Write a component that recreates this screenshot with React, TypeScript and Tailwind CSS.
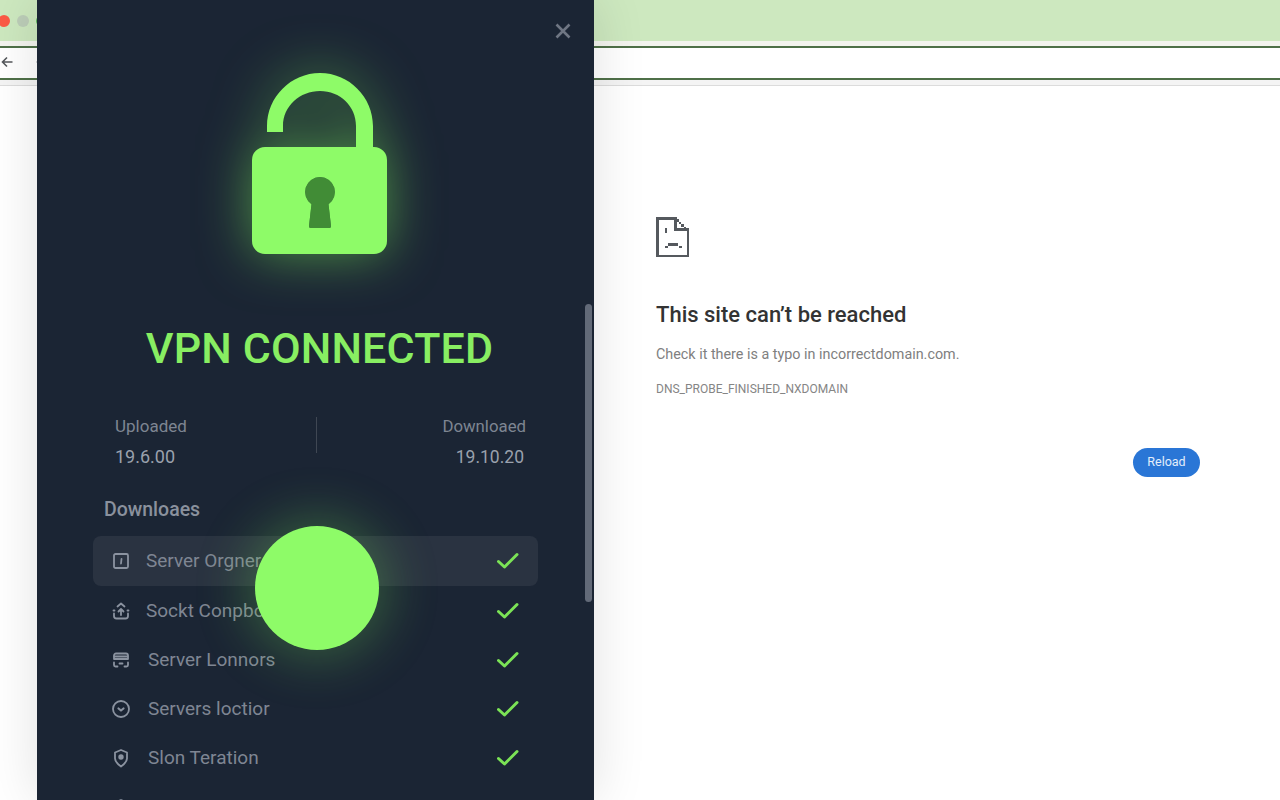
import React from "react";

const rows = [
  { label: "Server Orgner", icon: "a", gap: "gap-[15px]" },
  { label: "Sockt Conpbor", icon: "b", gap: "gap-[15px]" },
  { label: "Server Lonnors", icon: "c", gap: "gap-[17px]" },
  { label: "Servers loctior", icon: "d", gap: "gap-[17px]" },
  { label: "Slon Teration", icon: "e", gap: "gap-[17px]" },
  { label: "", icon: "e", gap: "gap-[17px]" },
];

function RowIcon({ kind }: { kind: string }) {
  const c = { fill: "none", stroke: "#8b93a0", strokeWidth: 1.8, strokeLinecap: "round" as const, strokeLinejoin: "round" as const };
  return (
    <svg width="20" height="20" viewBox="0 0 20 20" className="shrink-0">
      {kind === "a" && (<g {...c}><rect x="3" y="3" width="14" height="14" rx="1.5" /><path d="M10.5 8l-.5 4.500" /></g>)}
      {kind === "b" && (<g {...c}><path d="M6.500 5.500L10 2.500l3.500 3M3.500 9.500H2.500M16.500 9.500h1M3 12.500v2.500a2.500 2.500 0 0 0 2.500 2.500h9a2.500 2.500 0 0 0 2.500-2.500v-2.500" /><path d="M7.500 10.500L10 8l2.500 2.500M10 8v6" /></g>)}
      {kind === "c" && (<g {...c}><path d="M3 5.500a2 2 0 0 1 2-2h10a2 2 0 0 1 2 2V9H3z" /><path d="M3.500 6.500h13" /><path d="M3 12.500v2.500a1.500 1.500 0 0 0 1.500 1.500h2M17 12.500v2.500a1.500 1.500 0 0 1-1.500 1.500h-2M8.500 13.500h3" /></g>)}
      {kind === "d" && (<g {...c}><circle cx="10" cy="10" r="8" /><path d="M7.500 9.500l2.500 2 2.500-2" strokeWidth="2.200" /></g>)}
      {kind === "e" && (<g {...c}><path d="M10 2l6 2.500v6c0 3-2.500 5.500-6 8-3.500-2.500-6-5-6-8v-6z" /><circle cx="10" cy="9" r="1.800" fill="#8b93a0" /></g>)}
    </svg>
  );
}

function Check() {
  return (
    <svg width="22" height="18" viewBox="0 0 22 18" className="shrink-0">
      <path d="M1.500 9.500L7.500 15L20 2.500" fill="none" stroke="#7be356" strokeWidth="3" strokeLinecap="round" strokeLinejoin="round" />
    </svg>
  );
}

const KEYHOLE = "M68 104a15 15 0 0 0-8.500 27.300L57 153c-.2 1.300.5 2 2 2h18c1.500 0 2.200-.7 2-2l-2.500-21.700A15 15 0 0 0 68 104z";

function Lock() {
  return (
    <svg width="135" height="181" viewBox="0 0 135 181" className="drop-shadow-[0_0_26px_rgba(130,255,90,0.5)]">
      <path fill="#8efb68" d="M15 59V53C15 24 39 0 68 0s53 24 53 53v23h-17V53c-0-20-16-35-36-35S31 33 31 53v6z" />
      <path fill="#8efb68" fillRule="evenodd" d={`M13 74h109a13 13 0 0 1 13 13v81a13 13 0 0 1-13 13H13a13 13 0 0 1-13-13V87a13 13 0 0 1 13-13z${KEYHOLE}`} />
      <path fill="#418c36" d={KEYHOLE} />
    </svg>
  );
}

function SadPage() {
  return (
    <svg width="34" height="40" viewBox="0 0 34 40" shapeRendering="crispEdges" fill="#55595e">
      <rect x="0" y="0" width="20" height="2.500" />
      <rect x="0" y="0" width="2.500" height="40" />
      <rect x="0" y="37.500" width="33" height="2.500" />
      <rect x="30.500" y="12" width="2.500" height="28" />
      <rect x="18" y="0" width="2.500" height="13" />
      <rect x="18" y="11" width="15" height="2.500" />
      <rect x="20" y="2" width="2.500" height="2.500" />
      <rect x="22.500" y="4.500" width="2.500" height="2.500" />
      <rect x="25" y="7" width="2.500" height="2.500" />
      <rect x="27.500" y="9.500" width="2.500" height="2.500" />
      <rect x="8.500" y="11" width="2.500" height="5" />
      <rect x="12" y="26" width="10" height="2.500" />
      <rect x="8.500" y="28.500" width="3" height="2.500" />
      <rect x="22.500" y="28.500" width="3" height="2.500" />
    </svg>
  );
}

export default function App() {
  return (
    <div className="relative w-[1280px] h-[800px] overflow-hidden bg-white font-['Roboto','Liberation_Sans',sans-serif]">
      {/* Browser behind the panel */}
      <div className="flex flex-col h-full">
        <div className="h-[41px] shrink-0 bg-[#cde8bf] flex items-center -ml-[2px] gap-[7px]">
          <span className="w-[12px] h-[12px] rounded-full bg-[#fb5a45]" />
          <span className="w-[12px] h-[12px] rounded-full bg-[#bccdb8]" />
          <span className="w-[12px] h-[12px] rounded-full bg-[#5cb85c]" />
        </div>
        <div className="h-[45px] shrink-0 bg-white border-b border-[#dcdcdc] flex flex-col">
          <div className="h-[7px] bg-[#f3f4ee] border-b-2 border-[#4f7048] shrink-0" />
          <div className="flex-1 flex items-center pl-[1px] gap-[23px]">
            <svg width="12" height="12" viewBox="0 0 12 12" fill="none" stroke="#55585c" strokeWidth="1.600" className="-mt-[2px]">
              <path d="M11.500 6H1.500M6 1.500L1.500 6 6 10.500" />
            </svg>
            <svg width="12" height="12" viewBox="0 0 12 12" fill="none" stroke="#9a9da0" strokeWidth="1.600" className="-mt-[2px]">
              <path d="M0.500 6h10M6 1.500L10.500 6 6 10.500" />
            </svg>
          </div>
          <div className="h-[7px] bg-[#f4f4f4] border-t-2 border-[#4f7048] shrink-0" />
        </div>
        <div className="flex-1 flex">
          <div className="w-[656px] shrink-0" />
          <div className="flex-1 pt-[131px] pr-[80px] flex flex-col">
            <SadPage />
            <h1 className="mt-[43px] text-[22px] leading-[30px] font-medium text-[#333]">This site can’t be reached</h1>
            <p className="mt-[15px] text-[14.350px] leading-[20px] text-[#808080]">Check it there is a typo in incorrectdomain.com.</p>
            <p className="mt-[16px] text-[12px] leading-[16px] text-[#858585]">DNS_PROBE_FINISHED_NXDOMAIN</p>
            <div className="flex justify-end mt-[51px]">
              <button className="w-[67px] h-[29px] rounded-full bg-[#2a76d6] text-[#e3eefb] text-[12.500px]">Reload</button>
            </div>
          </div>
        </div>
      </div>

      {/* VPN panel */}
      <div className="absolute left-[37px] top-0 w-[557px] h-[800px] bg-[#1b2534] overflow-hidden shadow-[0_0_50px_rgba(0,0,0,0.12)]">
        <svg width="18" height="18" viewBox="0 0 18 18" className="absolute left-[517px] top-[22px]" fill="none" stroke="#6f7683" strokeWidth="2.600">
          <path d="M2.500 2.500l13 13M15.500 2.500l-13 13" />
        </svg>
        <div className="absolute right-[2px] top-[304px] w-[7px] h-[298px] rounded-full bg-[#626a78]" />

        <div className="flex flex-col h-full">
          <div className="pt-[73px] pl-[215px] shrink-0 flex">
            <Lock />
          </div>
          <h2 className="mt-[69px] ml-[8px] text-center text-[#88ee62] text-[43px] leading-[50px] font-medium tracking-[0.15px]">VPN CONNECTED</h2>

          <div className="mt-[44px] ml-[78px] mr-[68px] flex justify-between relative">
            <div className="flex flex-col">
              <span className="text-[17px] leading-[19px] text-[#7e8592]">Uploaded</span>
              <span className="mt-[11px] text-[18px] leading-[20px] text-[#9aa1ad]">19.6.00</span>
            </div>
            <div className="w-px h-[36px] bg-[#3f4753] absolute left-[201px] top-0" />
            <div className="flex flex-col items-end">
              <span className="text-[16.800px] leading-[19px] text-[#7e8592]">Downloaed</span>
              <span className="mt-[11px] text-[17.500px] leading-[20px] text-[#9aa1ad] mr-[2px]">19.10.20</span>
            </div>
          </div>

          <div className="mt-[31px] ml-[67px] text-[19.500px] leading-[24px] font-medium text-[#8a919d]">Downloaes</div>

          <div className="mt-[14px] ml-[56px] w-[445px] flex flex-col">
            {rows.map((r, i) => (
              <div
                key={i}
                className={`flex items-center justify-between pl-[18px] pr-[19px] shrink-0 ${i === 0 ? "h-[50px] bg-[#2a3341] rounded-[8px]" : "h-[49.250px]"}`}
              >
                <div className={`flex items-center ${r.gap}`}>
                  <RowIcon kind={r.icon} />
                  <span className="text-[19px] leading-[24px] text-[#7f8693]">{r.label}</span>
                </div>
                <Check />
              </div>
            ))}
          </div>
        </div>

        <div className="absolute left-[218px] top-[526px] w-[124px] h-[124px] rounded-full bg-[#8efb68] shadow-[0_0_50px_10px_rgba(125,245,90,0.26)]" />
      </div>
    </div>
  );
}
